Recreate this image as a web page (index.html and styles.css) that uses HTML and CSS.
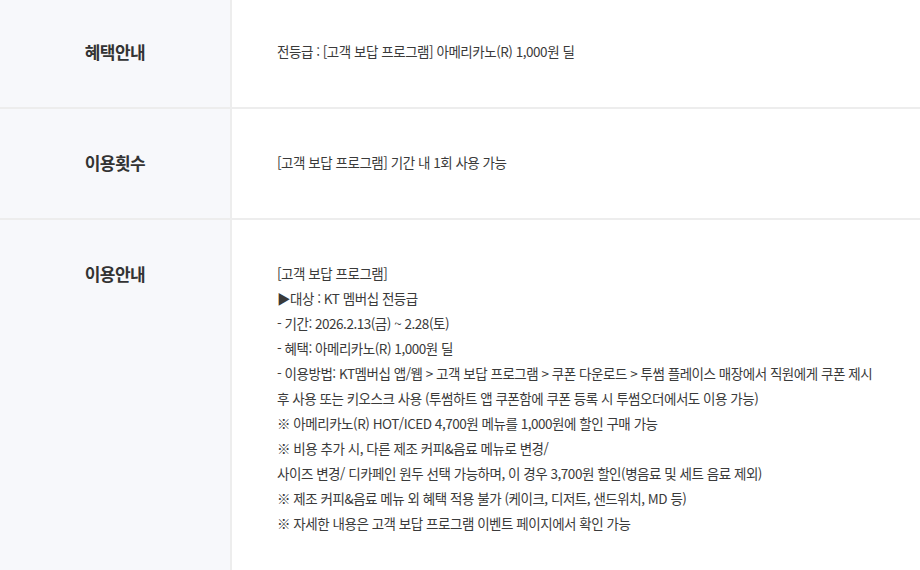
FILE: index.html
```html
<!DOCTYPE html>
<html lang="ko">
<head>
<meta charset="utf-8">
<link rel="stylesheet" href="styles.css">
</head>
<body>
<div class="info-table">
  <div class="row">
    <div class="label">혜택안내</div>
    <div class="value">전등급 : [고객 보답 프로그램] 아메리카노(R) 1,000원 딜</div>
  </div>
  <div class="row">
    <div class="label">이용횟수</div>
    <div class="value">[고객 보답 프로그램] 기간 내 1회 사용 가능</div>
  </div>
  <div class="row">
    <div class="label">이용안내</div>
    <div class="value">
      <p>[고객 보답 프로그램]</p>
      <p>▶대상 : KT 멤버십 전등급</p>
      <p>- 기간: 2026.2.13(금) ~ 2.28(토)</p>
      <p>- 혜택: 아메리카노(R) 1,000원 딜</p>
      <p>- 이용방법: KT멤버십 앱/웹 &gt; 고객 보답 프로그램 &gt; 쿠폰 다운로드 &gt; 투썸 플레이스 매장에서 직원에게 쿠폰 제시</p>
      <p>후 사용 또는 키오스크 사용 (투썸하트 앱 쿠폰함에 쿠폰 등록 시 투썸오더에서도 이용 가능)</p>
      <p>※ 아메리카노(R) HOT/ICED 4,700원 메뉴를 1,000원에 할인 구매 가능</p>
      <p>※ 비용 추가 시, 다른 제조 커피&amp;음료 메뉴로 변경/</p>
      <p>사이즈 변경/ 디카페인 원두 선택 가능하며, 이 경우 3,700원 할인(병음료 및 세트 음료 제외)</p>
      <p>※ 제조 커피&amp;음료 메뉴 외 혜택 적용 불가 (케이크, 디저트, 샌드위치, MD 등)</p>
      <p>※ 자세한 내용은 고객 보답 프로그램 이벤트 페이지에서 확인 가능</p>
    </div>
  </div>
</div>
</body>
</html>
```
FILE: styles.css
```css
html, body {
  margin: 0;
  padding: 0;
  background: #ffffff;
}
body {
  font-family: "Noto Sans CJK KR", "Noto Sans", sans-serif;
  color: #333;
}
.info-table {
  width: 920px;
}
.row {
  display: grid;
  grid-template-columns: 232px 1fr;
  border-bottom: 2px solid #ededed;
}
.label {
  background: #f7f8fb;
  border-right: 2px solid #ededed;
  text-align: center;
  font-size: 17px;
  font-weight: 700;
  letter-spacing: -0.03em;
  line-height: 25px;
  color: #333;
  padding: 41px 0 43px;
}
.value {
  padding: 41px 20px 43px 45px;
  font-size: 13.5px;
  line-height: 25px;
  letter-spacing: -0.035em;
  color: #3a3a3a;
  white-space: nowrap;
}
.row:first-child .label,
.row:first-child .value {
  padding-top: 39px;
}
.value p {
  margin: 0;
}
```
